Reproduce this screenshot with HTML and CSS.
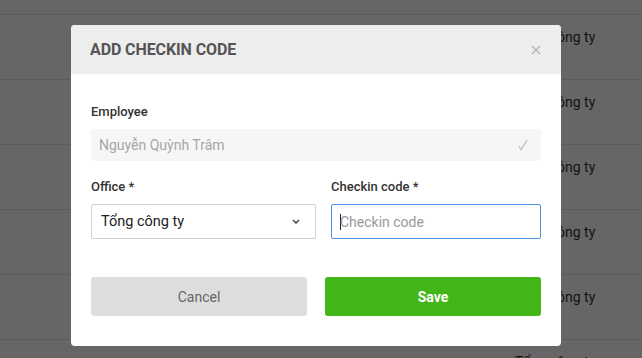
FILE: index.html
```html
<!DOCTYPE html>
<html lang="vi">
<head>
<meta charset="utf-8">
<title>Add checkin code</title>
<link rel="stylesheet" href="styles.css">
</head>
<body>
<div class="table">
  <div class="row"><span class="cell">Tổng công ty</span></div>
  <div class="row"><span class="cell">Tổng công ty</span></div>
  <div class="row"><span class="cell">Tổng công ty</span></div>
  <div class="row"><span class="cell">Tổng công ty</span></div>
  <div class="row"><span class="cell">Tổng công ty</span></div>
  <div class="row"><span class="cell">Tổng công ty</span></div>
</div>
<div class="overlay"></div>
<div class="modal">
  <div class="modal-header">
    <h2 class="modal-title">ADD CHECKIN CODE</h2>
    <span class="close">
      <svg width="10" height="10" viewBox="0 0 10 10"><path d="M1 1L9 9M9 1L1 9" stroke="#b5b5b5" stroke-width="1.4" fill="none"/></svg>
    </span>
  </div>
  <div class="modal-body">
    <div class="field">
      <label class="label">Employee</label>
      <div class="input disabled">
        <span>Nguyễn Quỳnh Trâm</span>
        <svg width="10" height="12" viewBox="0 0 10 12"><path d="M1 7.5L3.2 10.5L9 1" stroke="#bdbdbd" stroke-width="1.3" fill="none"/></svg>
      </div>
    </div>
    <div class="grid">
      <div class="field">
        <label class="label">Office *</label>
        <div class="input select">
          <span>Tổng công ty</span>
          <svg width="8" height="5" viewBox="0 0 8 5"><path d="M1 1L4 4L7 1" stroke="#444" stroke-width="1.5" fill="none"/></svg>
        </div>
      </div>
      <div class="field col2">
        <label class="label">Checkin code *</label>
        <div class="input focus"><span class="caret"></span><span class="placeholder">Checkin code</span></div>
      </div>
    </div>
    <div class="actions">
      <button class="btn cancel">Cancel</button>
      <button class="btn save">Save</button>
    </div>
  </div>
</div>
</body>
</html>
```

FILE: styles.css
```css
* { box-sizing: border-box; }
html, body { margin: 0; padding: 0; }
body {
  width: 642px;
  height: 358px;
  overflow: hidden;
  background: #fff;
  font-family: Roboto, "Noto Sans", sans-serif;
  position: relative;
}
.table { padding-top: 14px; }
.row {
  height: 65px;
  border-top: 1px solid #e6e6e6;
  padding-top: 13px;
}
.cell {
  display: block;
  padding-left: 515px;
  font-size: 14px;
  line-height: 18px;
  color: #333;
}
.overlay {
  position: absolute;
  inset: 0;
  background: rgba(0,0,0,0.6);
}
.modal {
  position: absolute;
  left: 71px;
  top: 25px;
  width: 490px;
  background: #fff;
  border-radius: 4px;
  overflow: hidden;
}
.modal-header {
  height: 49px;
  background: #ededed;
  display: flex;
  align-items: center;
  justify-content: space-between;
  padding: 0 20px 0 19px;
}
.modal-title {
  margin: 0;
  font-size: 16px;
  font-weight: 700;
  color: #555;
  letter-spacing: -0.1px;
}
.close { display: flex; margin-top: 1px; }
.modal-body { padding: 30px 20px 30px; }
.field { display: flex; flex-direction: column; }
.label {
  font-size: 13px;
  font-weight: 500;
  color: #333;
  line-height: 16px;
  margin-bottom: 9px;
}
.input {
  display: flex;
  align-items: center;
  justify-content: space-between;
  font-size: 14px;
  border-radius: 2px;
}
.disabled {
  height: 32px;
  background: #f6f6f6;
  border-radius: 3px;
  padding: 0 13px 0 8px;
  color: #a6a6a6;
}
.grid {
  display: grid;
  grid-template-columns: 1fr 1fr;
  margin-top: 18px;
}
.col2 { padding-left: 15px; }
.select {
  height: 35px;
  border: 1px solid #d0d0d0;
  padding: 0 15px 0 9px;
  color: #222;
  font-size: 14.5px;
}
.focus {
  height: 35px;
  border: 1px solid #4d90e0;
  justify-content: flex-start;
  padding: 0 8px;
}
.caret {
  width: 1px;
  height: 16px;
  background: #222;
  margin-right: -1px;
}
.placeholder { color: #999; }
.actions {
  display: flex;
  gap: 18px;
  margin-top: 38px;
}
.btn {
  flex: 1;
  height: 39px;
  border: none;
  border-radius: 3px;
  font-family: Roboto, "Noto Sans", sans-serif;
  font-size: 14px;
}
.cancel { background: #dddddd; color: #666; }
.save { background: #43b619; color: #fff; font-weight: 700; }
```
